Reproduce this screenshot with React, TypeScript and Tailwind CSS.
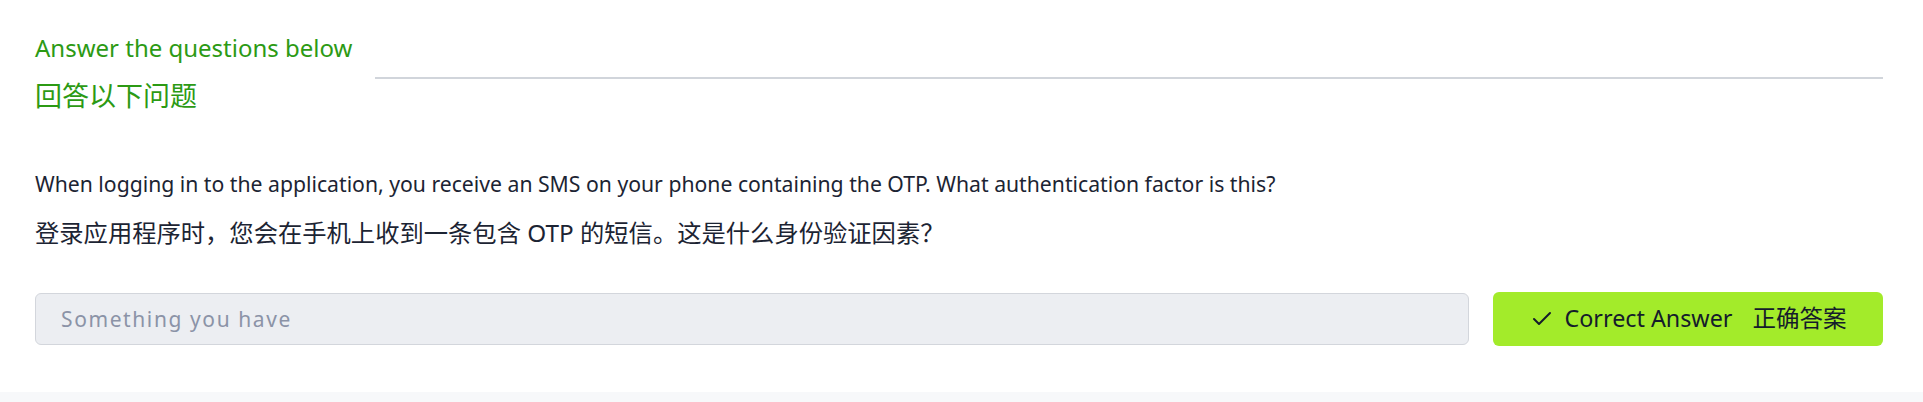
import { Check } from 'lucide-react';

export default function App() {
  return (
    <div className="w-full h-[402px] flex flex-col bg-white" style={{ fontFamily: '"Noto Sans", "Noto Sans CJK SC", sans-serif' }}>
      <div className="pl-[35px] pr-[40px] pt-[32px] pb-[46px]">
        <div className="flex items-start">
          <div className="w-[340px] shrink-0">
            <h3 className="text-[24px] leading-[32px] text-[#2c9a14]">Answer the questions below</h3>
            <h3 className="mt-[14px] text-[27px] leading-[36px] text-[#2c9a14]">回答以下问题</h3>
          </div>
          <div className="flex-1 h-[2px] mt-[45px] bg-[#d1d5db]"></div>
        </div>

        <div className="mt-[56px] text-[#1c2433]">
          <p className="text-[21.2px] leading-[28px]">
            When logging in to the application, you receive an SMS on your phone containing the OTP. What authentication factor is this?
          </p>
          <p className="mt-[19px] text-[24.3px] leading-[32px]">
            登录应用程序时，您会在手机上收到一条包含 OTP 的短信。这是什么身份验证因素？
          </p>
        </div>

        <div className="mt-[43px] flex items-center gap-[24px]">
          <input
            readOnly
            placeholder="Something you have"
            className="flex-1 h-[52px] px-[25px] rounded-[6px] border border-[#d3d6dc] bg-[#eceef2] text-[21px] tracking-[1.6px] text-[#8b93a7] placeholder:text-[#8b93a7] outline-none"
          />
          <button className="w-[390px] h-[54px] rounded-[6px] bg-[#a3eb2a] text-[#151c2b] flex items-center justify-center">
            <Check size={24} strokeWidth={2} className="mr-[11px]" />
            <span className="text-[23.3px] leading-none">Correct Answer</span>
            <span className="ml-[20px] text-[23.5px] leading-none">正确答案</span>
          </button>
        </div>
      </div>
      <div className="flex-1 bg-[#f7f8fa]"></div>
    </div>
  );
}
